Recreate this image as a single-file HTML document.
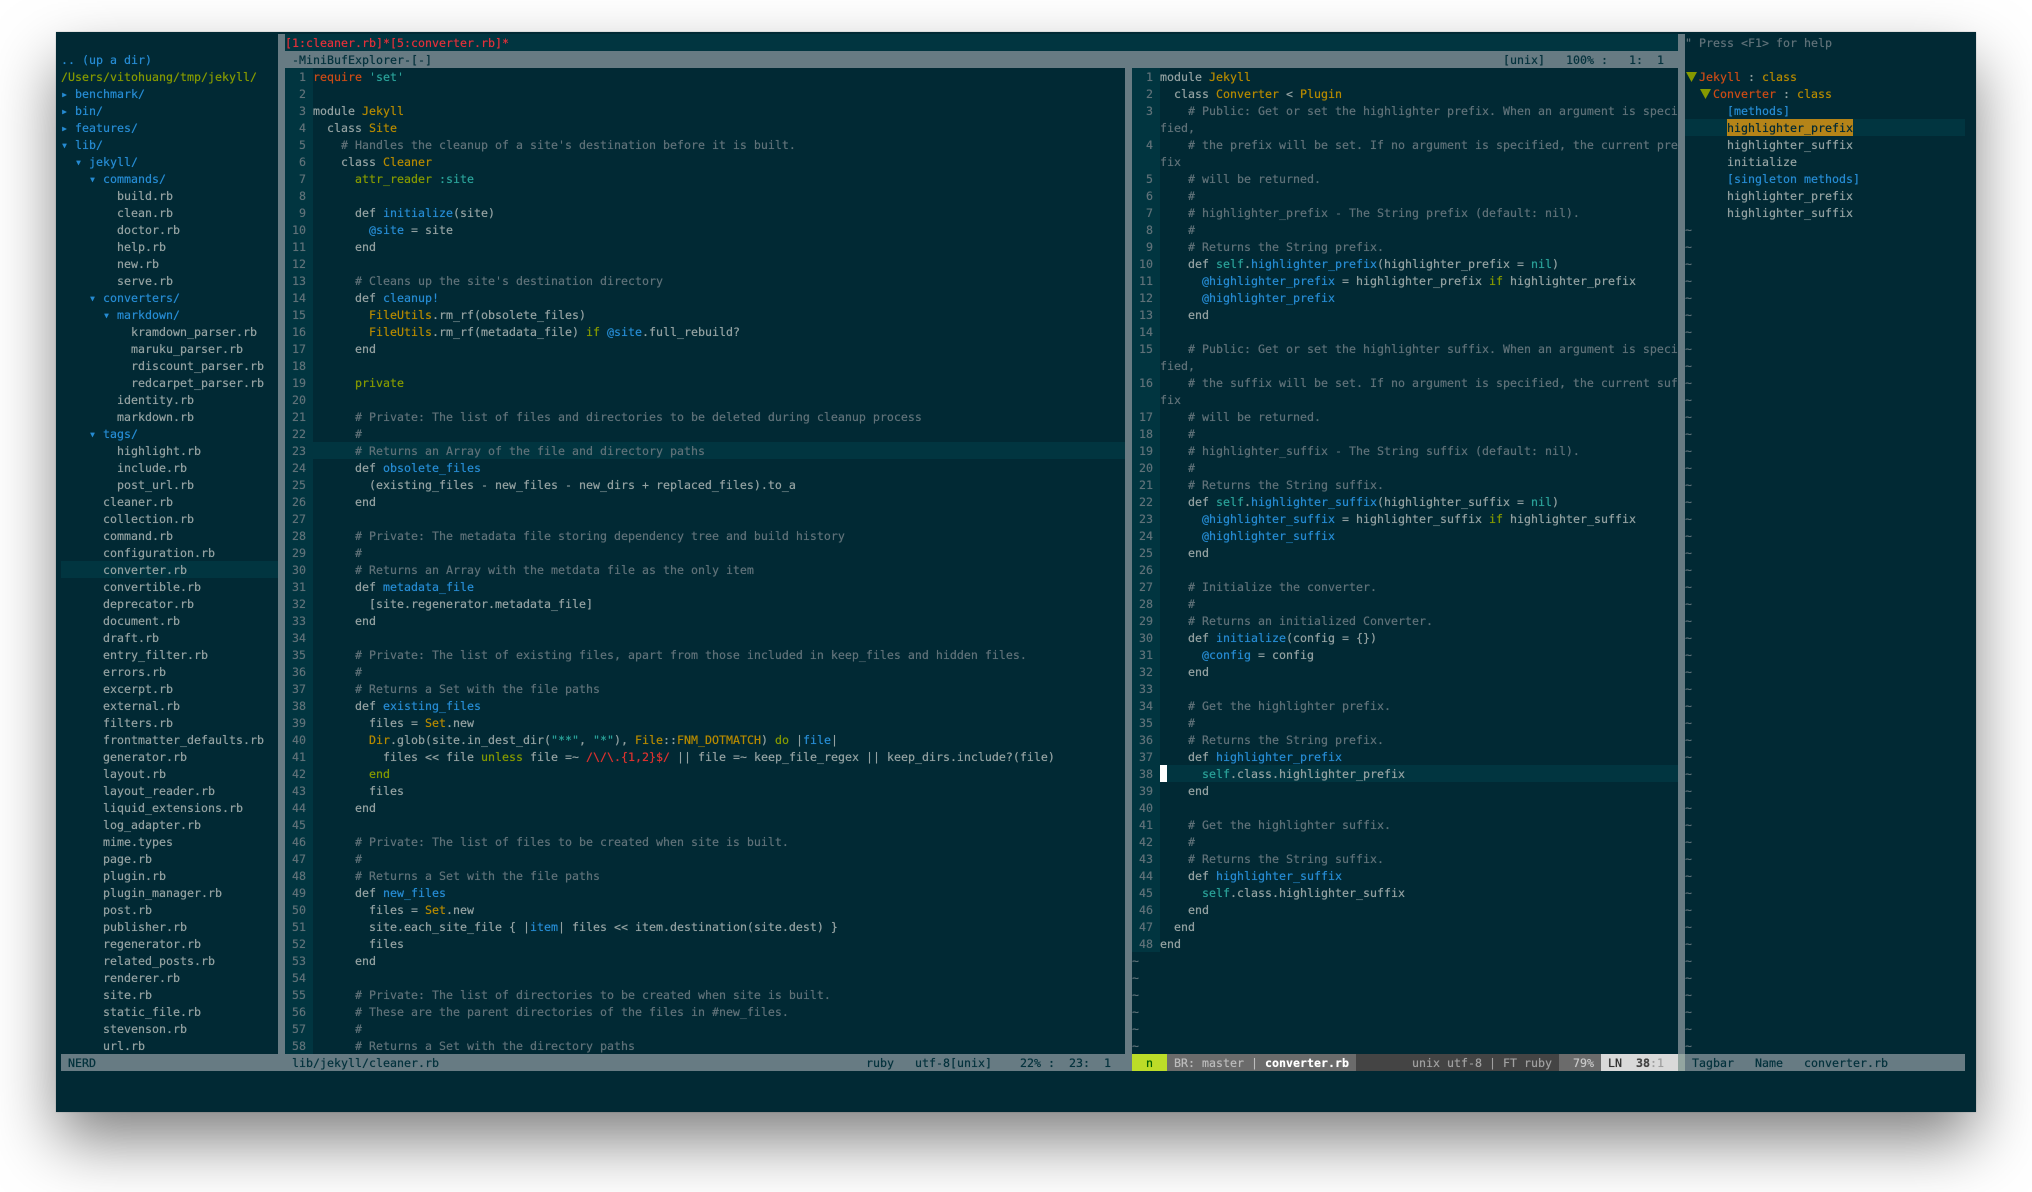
<!DOCTYPE html>
<html><head><meta charset="utf-8"><title>vim</title>
<style>
html,body{margin:0;padding:0;background:#fff;width:2032px;height:1192px;overflow:hidden}
#win{position:absolute;left:56px;top:32px;width:1920px;height:1080px;background:#012934;box-shadow:0 30px 60px -2px rgba(0,0,0,.5),0 0 1px rgba(0,0,0,.35)}
.a{position:absolute}
pre{position:absolute;margin:1px 0 0;font:11.63px/17px "DejaVu Sans Mono","Liberation Mono",monospace;color:#93a1a1;white-space:pre;text-shadow:0 0 .5px currentColor}
.k{color:#93a1a1}.c{color:#5f7178}.y{color:#b58900}.b{color:#268bd2}.t{color:#2aa198}.o{color:#859900}.r{color:#cb4b16}.R{color:#dc322f}
.n{color:#5f7178;text-align:right}
.s{color:#04323d}
.tri{position:absolute;width:11px;height:10px;background:#859900;clip-path:polygon(0 0,100% 0,50% 100%)}
</style></head><body>
<div id="win"></div>
<!-- backgrounds -->
<div class="a" style="left:285px;top:34px;width:1393px;height:17px;background:#013540"></div>
<div class="a" style="left:285px;top:51px;width:1393px;height:17px;background:#677b83"></div>
<div class="a" style="left:278px;top:34px;width:7px;height:1020px;background:#677b83"></div>
<div class="a" style="left:1125px;top:68px;width:7px;height:986px;background:#677b83"></div>
<div class="a" style="left:1678px;top:34px;width:7px;height:1020px;background:#677b83"></div>
<div class="a" style="left:285px;top:68px;width:28px;height:986px;background:#013540"></div>
<div class="a" style="left:1132px;top:68px;width:28px;height:884px;background:#013540"></div>
<!-- cursor lines -->
<div class="a" style="left:61px;top:561px;width:217px;height:17px;background:#013540"></div>
<div class="a" style="left:313px;top:442px;width:812px;height:17px;background:#013540"></div>
<div class="a" style="left:1160px;top:765px;width:518px;height:17px;background:#013540"></div>
<div class="a" style="left:1160px;top:765px;width:7px;height:17px;background:#fff"></div>
<div class="a" style="left:1685px;top:119px;width:280px;height:17px;background:#013540"></div>
<div class="a" style="left:1727px;top:119px;width:126px;height:17px;background:#b58418"></div>
<!-- bottom status -->
<div class="a" style="left:61px;top:1054px;width:1071px;height:17px;background:#677b83"></div>
<div class="a" style="left:1132px;top:1054px;width:35px;height:17px;background:#bcdc28"></div>
<div class="a" style="left:1167px;top:1054px;width:189px;height:17px;background:#6b6b6b"></div>
<div class="a" style="left:1356px;top:1054px;width:203px;height:17px;background:#444"></div>
<div class="a" style="left:1559px;top:1054px;width:42px;height:17px;background:#6b6b6b"></div>
<div class="a" style="left:1601px;top:1054px;width:77px;height:17px;background:#d9d9d9"></div>
<div class="a" style="left:1678px;top:1054px;width:7px;height:17px;background:#93a5a0"></div>
<div class="a" style="left:1685px;top:1054px;width:280px;height:17px;background:#677b83"></div>
<!-- tagbar triangles -->
<div class="tri" style="left:1686px;top:72px"></div>
<div class="tri" style="left:1700px;top:89px"></div>

<!-- tab row + minibuf status -->
<pre style="left:285px;top:34px;color:#e0303a">[1:cleaner.rb]*[5:converter.rb]*</pre>
<pre class="s" style="left:292px;top:51px"><span class="s">-MiniBufExplorer-[-]</span></pre>
<pre style="left:1503px;top:51px"><span class="s">[unix]   100% :   1:  1</span></pre>

<!-- NERDTree -->
<pre style="left:61px;top:51px"><span class="b">.. (up a dir)</span>
<span class="o">/Users/vitohuang/tmp/jekyll/</span>
<span class="b">▸ benchmark/
▸ bin/
▸ features/
▾ lib/
  ▾ jekyll/
    ▾ commands/</span>
        build.rb
        clean.rb
        doctor.rb
        help.rb
        new.rb
        serve.rb
<span class="b">    ▾ converters/
      ▾ markdown/</span>
          kramdown_parser.rb
          maruku_parser.rb
          rdiscount_parser.rb
          redcarpet_parser.rb
        identity.rb
        markdown.rb
<span class="b">    ▾ tags/</span>
        highlight.rb
        include.rb
        post_url.rb
      cleaner.rb
      collection.rb
      command.rb
      configuration.rb
      converter.rb
      convertible.rb
      deprecator.rb
      document.rb
      draft.rb
      entry_filter.rb
      errors.rb
      excerpt.rb
      external.rb
      filters.rb
      frontmatter_defaults.rb
      generator.rb
      layout.rb
      layout_reader.rb
      liquid_extensions.rb
      log_adapter.rb
      mime.types
      page.rb
      plugin.rb
      plugin_manager.rb
      post.rb
      publisher.rb
      regenerator.rb
      related_posts.rb
      renderer.rb
      site.rb
      static_file.rb
      stevenson.rb
      url.rb</pre>

<!-- left gutter -->
<pre class="n" style="left:285px;top:68px;width:21px"><span class="n">1
2
3
4
5
6
7
8
9
10
11
12
13
14
15
16
17
18
19
20
21
22
23
24
25
26
27
28
29
30
31
32
33
34
35
36
37
38
39
40
41
42
43
44
45
46
47
48
49
50
51
52
53
54
55
56
57
58</span></pre>

<!-- left code -->
<pre style="left:313px;top:68px"><span class="r">require</span> <span class="t">'set'</span>

module <span class="y">Jekyll</span>
  class <span class="y">Site</span>
    <span class="c"># Handles the cleanup of a site's destination before it is built.</span>
    class <span class="y">Cleaner</span>
      <span class="o">attr_reader</span> <span class="t">:site</span>

      def <span class="b">initialize</span>(site)
        <span class="b">@site</span> = site
      end

      <span class="c"># Cleans up the site's destination directory</span>
      def <span class="b">cleanup!</span>
        <span class="y">FileUtils</span>.rm_rf(obsolete_files)
        <span class="y">FileUtils</span>.rm_rf(metadata_file) <span class="o">if</span> <span class="b">@site</span>.full_rebuild?
      end

      <span class="o">private</span>

      <span class="c"># Private: The list of files and directories to be deleted during cleanup process</span>
      <span class="c">#</span>
      <span class="c"># Returns an Array of the file and directory paths</span>
      def <span class="b">obsolete_files</span>
        (existing_files - new_files - new_dirs + replaced_files).to_a
      end

      <span class="c"># Private: The metadata file storing dependency tree and build history</span>
      <span class="c">#</span>
      <span class="c"># Returns an Array with the metdata file as the only item</span>
      def <span class="b">metadata_file</span>
        [site.regenerator.metadata_file]
      end

      <span class="c"># Private: The list of existing files, apart from those included in keep_files and hidden files.</span>
      <span class="c">#</span>
      <span class="c"># Returns a Set with the file paths</span>
      def <span class="b">existing_files</span>
        files = <span class="y">Set</span>.new
        <span class="y">Dir</span>.glob(site.in_dest_dir(<span class="t">"**"</span>, <span class="t">"*"</span>), <span class="y">File</span>::<span class="y">FNM_DOTMATCH</span>) <span class="o">do</span> |<span class="b">file</span>|
          files &lt;&lt; file <span class="o">unless</span> file =~ <span class="R">/\/\.{1,2}$/</span> || file =~ keep_file_regex || keep_dirs.include?(file)
        <span class="o">end</span>
        files
      end

      <span class="c"># Private: The list of files to be created when site is built.</span>
      <span class="c">#</span>
      <span class="c"># Returns a Set with the file paths</span>
      def <span class="b">new_files</span>
        files = <span class="y">Set</span>.new
        site.each_site_file { |<span class="b">item</span>| files &lt;&lt; item.destination(site.dest) }
        files
      end

      <span class="c"># Private: The list of directories to be created when site is built.</span>
      <span class="c"># These are the parent directories of the files in #new_files.</span>
      <span class="c">#</span>
      <span class="c"># Returns a Set with the directory paths</span></pre>

<!-- right gutter -->
<pre class="n" style="left:1132px;top:68px;width:21px"><span class="n">1
2
3

4

5
6
7
8
9
10
11
12
13
14
15

16

17
18
19
20
21
22
23
24
25
26
27
28
29
30
31
32
33
34
35
36
37
38
39
40
41
42
43
44
45
46
47
48</span></pre>

<!-- right code -->
<pre style="left:1160px;top:68px">module <span class="y">Jekyll</span>
  class <span class="y">Converter</span> &lt; <span class="y">Plugin</span>
    <span class="c"># Public: Get or set the highlighter prefix. When an argument is speci</span>
<span class="c">fied,</span>
    <span class="c"># the prefix will be set. If no argument is specified, the current pre</span>
<span class="c">fix</span>
    <span class="c"># will be returned.</span>
    <span class="c">#</span>
    <span class="c"># highlighter_prefix - The String prefix (default: nil).</span>
    <span class="c">#</span>
    <span class="c"># Returns the String prefix.</span>
    def <span class="t">self</span>.<span class="b">highlighter_prefix</span>(highlighter_prefix = <span class="t">nil</span>)
      <span class="b">@highlighter_prefix</span> = highlighter_prefix <span class="o">if</span> highlighter_prefix
      <span class="b">@highlighter_prefix</span>
    end

    <span class="c"># Public: Get or set the highlighter suffix. When an argument is speci</span>
<span class="c">fied,</span>
    <span class="c"># the suffix will be set. If no argument is specified, the current suf</span>
<span class="c">fix</span>
    <span class="c"># will be returned.</span>
    <span class="c">#</span>
    <span class="c"># highlighter_suffix - The String suffix (default: nil).</span>
    <span class="c">#</span>
    <span class="c"># Returns the String suffix.</span>
    def <span class="t">self</span>.<span class="b">highlighter_suffix</span>(highlighter_suffix = <span class="t">nil</span>)
      <span class="b">@highlighter_suffix</span> = highlighter_suffix <span class="o">if</span> highlighter_suffix
      <span class="b">@highlighter_suffix</span>
    end

    <span class="c"># Initialize the converter.</span>
    <span class="c">#</span>
    <span class="c"># Returns an initialized Converter.</span>
    def <span class="b">initialize</span>(config = {})
      <span class="b">@config</span> = config
    end

    <span class="c"># Get the highlighter prefix.</span>
    <span class="c">#</span>
    <span class="c"># Returns the String prefix.</span>
    def <span class="b">highlighter_prefix</span>
      <span class="t">self</span>.class.highlighter_prefix
    end

    <span class="c"># Get the highlighter suffix.</span>
    <span class="c">#</span>
    <span class="c"># Returns the String suffix.</span>
    def <span class="b">highlighter_suffix</span>
      <span class="t">self</span>.class.highlighter_suffix
    end
  end
end</pre>

<!-- right tildes -->
<pre class="c" style="left:1132px;top:952px"><span class="c">~
~
~
~
~
~</span></pre>

<!-- tagbar -->
<pre style="left:1685px;top:34px"><span class="c">" Press &lt;F1&gt; for help</span>

  <span class="r">Jekyll</span> : <span class="y">class</span>
    <span class="r">Converter</span> : <span class="y">class</span>
      <span class="b">[methods]</span>
      <span style="color:#012934">highlighter_prefix</span>
      highlighter_suffix
      initialize
      <span class="b">[singleton methods]</span>
      highlighter_prefix
      highlighter_suffix
<span class="c">~
~
~
~
~
~
~
~
~
~
~
~
~
~
~
~
~
~
~
~
~
~
~
~
~
~
~
~
~
~
~
~
~
~
~
~
~
~
~
~
~
~
~
~
~
~
~
~
~</span></pre>

<!-- bottom status text -->
<pre style="left:68px;top:1054px"><span class="s">NERD</span></pre>
<pre style="left:292px;top:1054px"><span class="s">lib/jekyll/cleaner.rb</span></pre>
<pre style="left:866px;top:1054px"><span class="s">ruby   utf-8[unix]    22% :  23:  1</span></pre>
<pre style="left:1146px;top:1054px;color:#005f00">n</pre>
<pre style="left:1174px;top:1054px;color:#bcbcbc">BR: master | <b style="color:#fff">converter.rb</b></pre>
<pre style="left:1412px;top:1054px;color:#a0a0a0">unix utf-8 | FT ruby</pre>
<pre style="left:1573px;top:1054px;color:#c8c8c8">79%</pre>
<pre style="left:1608px;top:1054px;color:#303030">LN  <b style="color:#444">38</b><span style="color:#9e9e9e">:1</span></pre>
<pre style="left:1692px;top:1054px"><span class="s">Tagbar   Name   converter.rb</span></pre>
</body></html>
